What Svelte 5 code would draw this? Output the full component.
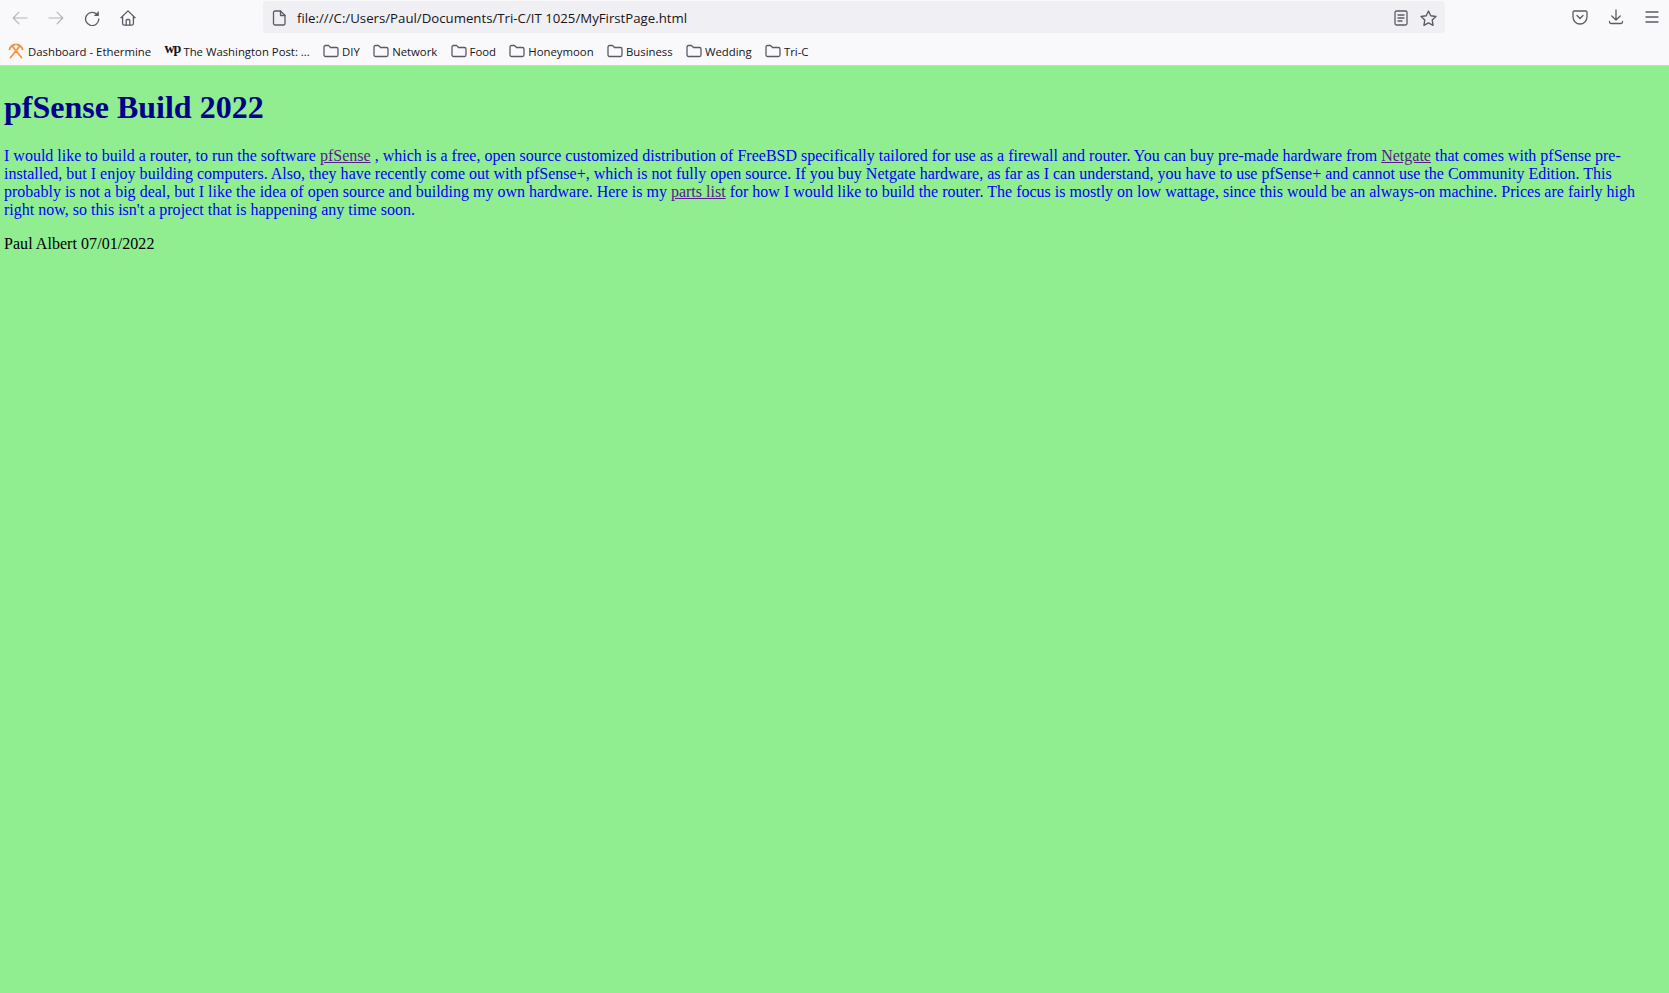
<script lang="ts">
  const bookmarks = ["DIY", "Network", "Food", "Honeymoon", "Business", "Wedding", "Tri-C"];
</script>

<div class="browser">
  <header class="chrome">
    <div class="toolbar">
      <div class="nav">
        <button class="dim" aria-label="Back">
          <svg viewBox="0 0 16 16"><path d="M15 8H1.500M7 2.200 1.200 8 7 13.800" /></svg>
        </button>
        <button class="dim" aria-label="Forward">
          <svg viewBox="0 0 16 16"><path d="M1 8h13.500M9 2.200 14.800 8 9 13.800" /></svg>
        </button>
        <button aria-label="Reload">
          <svg viewBox="0 0 16 16"><path d="M12.800 4.200A6.600 6.600 0 1 0 14.800 9" /><path class="solid" d="M14.800 1v5h-5z" /></svg>
        </button>
        <button aria-label="Home">
          <svg viewBox="0 0 16 16"><path d="M1 7.800 8 .9l7 6.900M2.600 6.800v6.700a1.600 1.600 0 0 0 1.600 1.600h7.600a1.600 1.600 0 0 0 1.600-1.600V6.800" /><path d="M6.200 15V10.500a1 1 0 0 1 1-1h1.600a1 1 0 0 1 1 1V15" /></svg>
        </button>
      </div>
      <div class="urlbar">
        <svg class="page" viewBox="0 0 16 16"><path d="M2.500 2.500A1.500 1.500 0 0 1 4 1h5.500L14 5.500v8a1.500 1.500 0 0 1-1.500 1.500H4a1.500 1.500 0 0 1-1.500-1.500Z" /><path d="M9.500 1v4.500H14" /></svg>
        <span class="url">file:///C:/Users/Paul/Documents/Tri-C/IT 1025/MyFirstPage.html</span>
        <svg class="reader" viewBox="0 0 16 16"><rect x="2" y="1" width="12" height="14" rx="1.500" /><path d="M5 5h6M5 8h6M5 11h4" /></svg>
        <svg class="star" viewBox="0 0 16 16"><path d="m8 1 2.100 4.400 4.900.7-3.500 3.400.8 4.900L8 12.100l-4.300 2.300.8-4.900L1 6.100l4.900-.7Z" /></svg>
      </div>
      <div class="actions">
        <svg viewBox="0 0 16 16"><path d="M2.500 2h11A1.500 1.500 0 0 1 15 3.500V8A7 7 0 0 1 1 8V3.500A1.500 1.500 0 0 1 2.500 2Z" /><path d="M5 6.500 8 9.500l3-3" /></svg>
        <svg viewBox="0 0 16 16"><path d="M8 1v10M3.800 7 8 11l4.200-4M1.500 12.500V13A1.500 1.500 0 0 0 3 14.500h10a1.500 1.500 0 0 0 1.500-1.500v-.500" /></svg>
        <svg viewBox="0 0 16 16"><path d="M2 3h12M2 8h12M2 13h12" /></svg>
      </div>
    </div>
    <nav class="bookmarks">
      <span class="mark">
        <svg class="fav" viewBox="0 0 16 16"><path d="M1.500 6.500Q2.500 2.500 7 1.500M14.500 6.500Q13.500 2.500 9 1.500M4.500 3.500 13.500 14.500M11.500 3.500 2.500 14.500" /></svg>
        Dashboard - Ethermine
      </span>
      <span class="mark">
        <span class="wp">wp</span>
        The Washington Post: ...
      </span>
      {#each bookmarks as name}
        <span class="mark">
          <svg class="folder" viewBox="0 0 16 16"><path d="M1 4a1.500 1.500 0 0 1 1.500-1.500h3L7.500 4.500h6A1.500 1.500 0 0 1 15 6v6a1.500 1.500 0 0 1-1.500 1.500h-11A1.500 1.500 0 0 1 1 12Z" /></svg>
          {name}
        </span>
      {/each}
    </nav>
  </header>

  <main>
    <h1>pfSense Build 2022</h1>
    <p class="intro">
      I would like to build a router, to run the software <a href="#pfsense">pfSense</a> , which is a free, open source customized distribution of FreeBSD specifically tailored for use as a firewall and router. You can buy pre-made hardware from <a href="#netgate">Netgate</a> that comes with pfSense pre-installed, but I enjoy building computers. Also, they have recently come out with pfSense+, which is not fully open source. If you buy Netgate hardware, as far as I can understand, you have to use pfSense+ and cannot use the Community Edition. This probably is not a big deal, but I like the idea of open source and building my own hardware. Here is my <a href="#parts">parts list</a> for how I would like to build the router. The focus is mostly on low wattage, since this would be an always-on machine. Prices are fairly high right now, so this isn't a project that is happening any time soon.
    </p>
    <p class="sig">Paul Albert 07/01/2022</p>
  </main>
</div>

<style>
  :global(body) {
    margin: 0;
    background: #90ee90;
  }

  .browser {
    display: flex;
    flex-direction: column;
    min-height: 993px;
  }

  .chrome {
    background: #f9f9fb;
    border-bottom: 1px solid #cfcfd8;
    height: 65px;
    font-family: "Open Sans", "Noto Sans", sans-serif;
    color: #15141a;
  }

  svg {
    fill: none;
    stroke: #5b5b66;
    stroke-width: 1.3;
    stroke-linecap: round;
    stroke-linejoin: round;
  }

  .solid {
    fill: #5b5b66;
    stroke: none;
  }

  .toolbar {
    display: flex;
    align-items: center;
    height: 34px;
  }

  .nav {
    display: flex;
    gap: 20px;
    width: 263px;
    margin-top: 1px;
    padding-left: 12px;
    box-sizing: border-box;
  }

  .nav button {
    width: 16px;
    height: 16px;
    padding: 0;
    border: 0;
    background: none;
  }

  .nav svg {
    display: block;
    width: 16px;
    height: 16px;
  }

  .nav .dim svg {
    stroke: #b3b3ba;
    stroke-width: 1.1;
  }

  .urlbar {
    display: flex;
    align-items: center;
    width: 1182px;
    height: 32px;
    background: #f0f0f4;
    border-radius: 4px;
    padding: 2px 8px 0 8px;
    box-sizing: border-box;
  }

  .page {
    width: 16px;
    height: 16px;
    margin-right: 10px;
  }

  .url {
    flex: 1;
    font-size: 13.230px;
    white-space: nowrap;
  }

  .reader {
    width: 16px;
    height: 16px;
    margin-right: 11.500px;
  }

  .star {
    width: 17px;
    height: 17px;
  }

  .actions {
    display: flex;
    gap: 20px;
    margin-left: auto;
    padding-right: 9px;
  }

  .actions svg {
    display: block;
    width: 16px;
    height: 16px;
  }

  .bookmarks {
    display: flex;
    align-items: center;
    gap: 13.300px;
    height: 31px;
    padding: 3px 0 0 8px;
    box-sizing: border-box;
    font-size: 11.350px;
  }

  .mark {
    display: flex;
    align-items: center;
    gap: 3px;
    white-space: nowrap;
  }

  .fav {
    width: 16px;
    height: 16px;
    margin-right: 1px;
    stroke: #f6923c;
    stroke-width: 1.800;
  }

  .folder {
    width: 16px;
    height: 16px;
  }

  .wp {
    font-family: "Liberation Serif", serif;
    font-weight: 700;
    font-size: 14px;
    letter-spacing: -1px;
    line-height: 1;
    margin-top: -4px;
    width: 16px;
  }

  main {
    padding: 0 4px;
    font-family: "Liberation Serif", serif;
    font-size: 16px;
  }

  h1 {
    margin: 23px 0 21px;
    font-size: 32px;
    line-height: 37px;
    color: #00008b;
  }

  .intro {
    margin: 0 0 16px;
    line-height: 18px;
    letter-spacing: 0.004px;
    color: #0000ff;
  }

  .intro a {
    color: #551a8b;
  }

  .sig {
    margin: 0;
    line-height: 18px;
    letter-spacing: 0.05px;
    color: #000;
  }
</style>
